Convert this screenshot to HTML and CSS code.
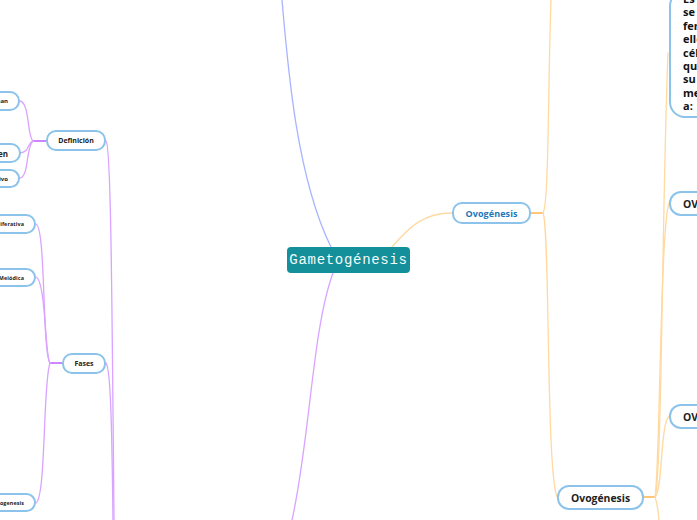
FILE: index.html
```html
<!DOCTYPE html>
<html lang="es">
<head>
<meta charset="utf-8">
<title>Gametogénesis</title>
<link rel="stylesheet" href="styles.css">
</head>
<body>
<main class="map">
<svg class="links" width="697" height="520" viewBox="0 0 697 520" fill="none" aria-hidden="true">
  <g class="blue">
    <path d="M282 0C288 70 297 178 331 247"/>
  </g>
  <g class="violet">
    <path d="M333 273C312 330 310 440 292 520"/>
    <path d="M106 141C111 145 112 300 114 520"/>
    <path d="M106 363C111 368 112 440 113 520"/>
    <path class="stem" d="M46 141H33"/>
    <path d="M33 141C27 137 30 103 20 101"/>
    <path d="M33 141C27 143 30 152 20 153"/>
    <path d="M33 141C26 146 29 177 20 178"/>
    <path class="stem" d="M62 363H50"/>
    <path d="M50 363C42 352 46 228 36 224"/>
    <path d="M50 363C45 358 46 281 36 277"/>
    <path d="M50 363C43 380 46 498 36 503"/>
  </g>
  <g class="orange">
    <path d="M392 247C410 226 424 213 452 213"/>
    <path class="stem" d="M531 213H543"/>
    <path d="M543 213C549 205 548 80 551 0"/>
    <path d="M543 213C550 225 546 470 557 497"/>
    <path class="stem" d="M644 497H655"/>
    <path d="M655 497C662 480 662 200 668 53"/>
    <path d="M655 497C660 470 660 230 669 203"/>
    <path d="M655 497C663 490 660 425 669 416"/>
    <path d="M655 497C658 505 658 512 659 520"/>
  </g>
</svg>

<div class="node edge left n-a">Cómo se originan</div>
<div class="node medium left n-b">Resumen</div>
<div class="node edge left n-c">Objetivo</div>
<div class="node small centered n-def">Definición</div>
<div class="node tiny left n-d">Fase Proliferativa</div>
<div class="node tiny left n-e">Fase Meiódica</div>
<div class="node tiny left n-f">Espermatogenesis</div>
<div class="node small centered n-fases">Fases</div>

<div class="root">Gametogénesis</div>
<div class="node branch centered n-ovo">Ovogénesis</div>
<div class="node large centered n-ovo2">Ovogénesis</div>

<div class="node block n-text">Es un proceso en el que<br>se forman los gametos<br>femeninos. Para<br>ello, las<br>células germinales<br>que<br>su<br>meiosis dan lugar<br>a:</div>
<div class="node large right n-ov1">OVOGONIA</div>
<div class="node large right n-ov2">OVOCITO</div>
</main>
</body>
</html>
```
FILE: styles.css
```css
html, body {
  margin: 0;
  padding: 0;
  background: #fff;
  overflow: hidden;
}
.map {
  position: relative;
  width: 697px;
  height: 520px;
  overflow: hidden;
  font-family: "Open Sans", "Noto Sans", sans-serif;
}
.links {
  position: absolute;
  left: 0;
  top: 0;
}
.links path {
  stroke-width: 1.3;
  stroke-linecap: round;
}
.links .stem { stroke-width: 2; }
.blue path { stroke: #a9b4ff; }
.violet path { stroke: #d9a3ff; }
.orange path { stroke: #ffd9a0; }
.orange .stem { stroke: #ffc67a; }
.violet .stem { stroke: #d184ff; }
.node {
  position: absolute;
  box-sizing: border-box;
  display: flex;
  align-items: center;
  background: #fff;
  border: 2px solid #8cc3ea;
  border-radius: 10px;
  color: #222;
  font-weight: 700;
  white-space: nowrap;
}
.centered { justify-content: center; }
.left { justify-content: flex-end; }
.right { padding-left: 12px; }
.small { font-size: 7px; }
.edge { font-size: 6px; }
.tiny { font-size: 5.4px; letter-spacing: 0.1px; }
.medium { font-size: 8px; }
.large { font-size: 10.4px; border-radius: 12px; }
.branch { font-size: 9px; letter-spacing: 0.1px; color: #1b78b8; }
.block {
  display: block;
  padding: 0 0 0 12px;
  font-size: 11px;
  line-height: 13.4px;
  color: #111;
  border-radius: 16px;
}
.root {
  position: absolute;
  left: 287px;
  top: 247px;
  width: 123px;
  height: 26px;
  display: flex;
  align-items: center;
  justify-content: center;
  border-radius: 4px;
  background: #14909a;
  color: #f4fbfb;
  font-family: "Liberation Mono", "DejaVu Sans Mono", monospace;
  font-size: 14px;
  letter-spacing: 0.7px;
}
.n-a { left: -60px; top: 91px; width: 80px; height: 20px; padding-right: 10px; }
.n-b { left: -60px; top: 143px; width: 81px; height: 20px; padding-right: 11px; }
.n-c { left: -60px; top: 169px; width: 80px; height: 19px; padding-right: 10px; }
.n-def { left: 46px; top: 130px; width: 60px; height: 21px; }
.n-d { left: -30px; top: 214px; width: 66px; height: 20px; padding-right: 10px; }
.n-e { left: -30px; top: 268px; width: 66px; height: 19px; padding-right: 10px; }
.n-f { left: -30px; top: 493px; width: 66px; height: 19px; padding-right: 10px; }
.n-fases { left: 62px; top: 353px; width: 44px; height: 21px; }
.n-ovo { left: 452px; top: 202px; width: 79px; height: 22px; }
.n-ovo2 { left: 557px; top: 485px; width: 87px; height: 25px; }
.n-text { left: 669px; top: -10px; width: 160px; height: 128px; }
.n-ov1 { left: 669px; top: 191px; width: 100px; height: 25px; }
.n-ov2 { left: 669px; top: 404px; width: 100px; height: 25px; }
```
